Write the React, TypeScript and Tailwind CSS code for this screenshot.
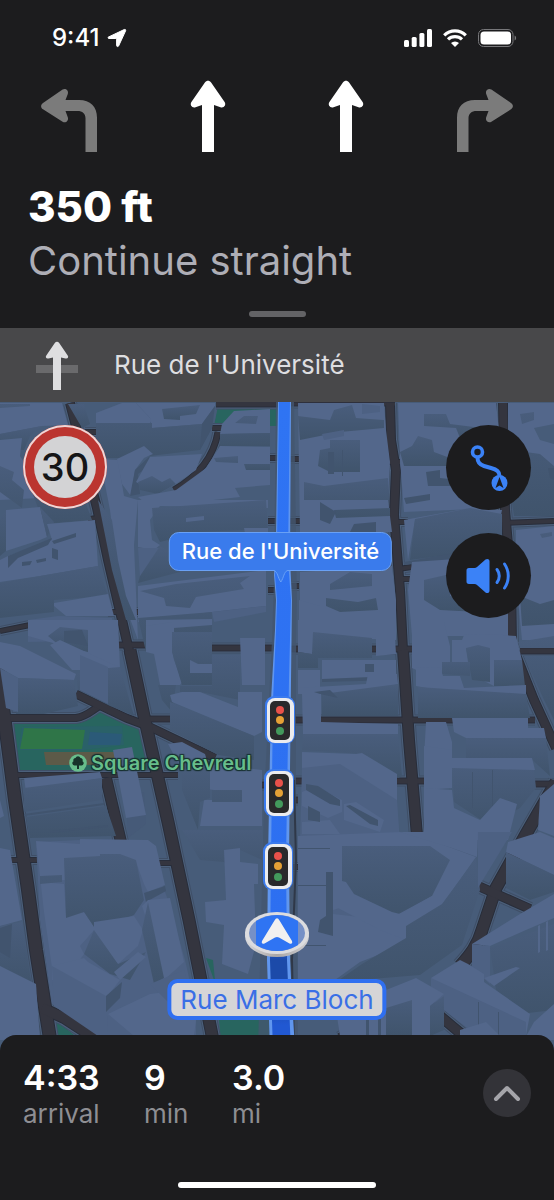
import React from 'react';

const TONES: Record<string, string> = {
  roof: '#53678b',
  soft: '#4d6183',
  wall: 'url(#wall)',
  dark: '#41546e',
};

const ROADS: { d: string; w: number }[] = [
  { d: 'M216 404H280', w: 5 },
  { d: 'M290 404H395', w: 3 },
  { d: 'M212 428H225', w: 4 },
  { d: 'M85 432H98', w: 4 },
  { d: 'M218 432C214 455 200 475 174 490', w: 5 },
  { d: 'M285 459H300M268 458H280M268 521H280M290 521H302M268 590H280M288 586H299', w: 4 },
  { d: 'M104 536L118 528', w: 5 },
  { d: 'M108 612H138M88 519L98 518', w: 4 },
  { d: 'M383 462H400M394 522H408M503 523L554 521', w: 4 },
  { d: 'M398 569L412 567M400 579H412', w: 4 },
  { d: 'M0 631L30 625', w: 4 },
  { d: 'M115 645H146M212 648H282', w: 5 },
  { d: 'M288 649H412M520 651H554', w: 5 },
  { d: 'M150 719H172M290 720H535', w: 5 },
  { d: 'M0 718H76C88 716 92 710 101 705', w: 6 },
  { d: 'M76 694L126 718L150 727L215 758', w: 7 },
  { d: 'M10 775H178', w: 4 },
  { d: 'M288 781H425M534 784H554M262 785H280M288 800H298', w: 5 },
  { d: 'M106 778L121 842', w: 10 },
  { d: 'M10 860H38M158 863H178M288 867H298', w: 4 },
  { d: 'M70 403L77 430L97 508L108 560L122 620L144 716L168 822L189 920L212 1040', w: 8 },
  { d: 'M-4 660L2 700L15 800L28 890L36 950L51 1045', w: 12 },
  { d: 'M130 650L144 716L168 822L189 920L214 1045', w: 11 },
  { d: 'M42 1008L64 1018L98 1040', w: 10 },
  { d: 'M390 403L391 440L396 470L394 515L400 590L403 650L409 740L418 840', w: 8 },
  { d: 'M403 650L409 740L417 836', w: 10 },
  { d: 'M503 403L505 510L511 580L512 645L534 700L556 748', w: 8 },
  { d: 'M556 782L526 834L496 888L482 930C478 945 470 955 460 966', w: 11 },
  { d: 'M366 1022L340 1038', w: 8 },
  { d: 'M476 885L530 909', w: 8 },
  { d: 'M440 1016L465 1037', w: 9 },
];

// painted back to front
const BUILDINGS: [string, string][] = [
  // north-west
  ['roof', 'M0 403H62L68 425L42 426L0 434Z'],
  ['wall', 'M0 404H30V406L0 408ZM68 404H84L90 424L82 428Z'],
  ['wall', 'M0 434L42 426L30 436L24 450L0 449Z'],
  ['roof', 'M0 440L22 438L20 456L34 478L40 498L0 500Z'],
  ['wall', 'M0 466L14 472L12 480L24 490L22 508L0 492ZM32 492L60 508L86 504L92 520L44 524Z'],
  ['roof', 'M6 510L40 507L47 537L40 540L6 551Z'],
  ['wall', 'M6 510V551L0 556V520ZM40 507L54 522L47 537Z'],
  ['roof', 'M8 556L52 540L47 524L95 520L98 566L40 576L0 582V560Z'],
  ['dark', 'M8 556L52 538L48 545L18 558L8 568ZM52 541L76 533V537L54 544ZM22 562L32 561L30 565L22 566ZM36 560L46 558V561L37 563ZM52 548L58 550V560L52 558Z'],
  ['wall', 'M0 583L98 566L108 596L54 600L54 612L0 618Z'],
  ['roof', 'M54 603L108 594L114 616L66 616L54 606Z'],
  ['soft', 'M28 620L58 616L112 618L114 640L28 642Z'],
  // strip east of the left avenue
  ['roof', 'M100 459L118 460L124 496L138 500L134 545L138 640L129 616L116 560L110 510Z'],
  ['wall', 'M98 500L112 520L118 560L126 596L136 620H126L112 570Z'],
  ['roof', 'M96 413L122 403H136L152 420L150 423H96Z'],
  ['roof', 'M136 403H215V406L202 424L152 428L150 418Z'],
  ['wall', 'M162 409L200 405L196 414L180 416V420L164 419Z'],
  ['wall', 'M96 423H152V428L202 424L215 406L212 428L200 450L150 456L130 458H96Z'],
  ['dark', 'M202 424L215 406L212 428L200 450Z'],
  ['roof', 'M117 459L144 446L153 454L144 458L135 470L131 496L122 484Z'],
  ['dark', 'M135 470L150 456L146 468L138 474L140 494L130 496Z'],
  ['roof', 'M150 457L202 454L196 470L176 484L158 494L136 482Z'],
  ['wall', 'M138 482L152 476L162 482L170 478L176 484L158 494L140 490Z'],
  ['roof', 'M220 434L222 424L234 411L270 409V433Z'],
  ['wall', 'M235 423L244 416H258L256 424ZM220 434L270 433V446H220Z'],
  ['roof', 'M206 468L220 446L270 447V485L235 488L240 497L150 507L138 497L176 490L198 474Z'],
  ['wall', 'M214 458L238 456V463L216 462ZM244 464H270V470H246Z'],
  ['roof', 'M138 500H268V508L160 506L150 520L152 540L160 545L154 550L138 547Z'],
  ['wall', 'M152 508L266 500L268 532L245 540L245 530L200 532L160 542L154 530Z'],
  ['roof', 'M186 518L204 516V520L186 522ZM244 528H268V560H250Z'],
  ['soft', 'M138 548H160V570L140 578Z'],
  ['wall', 'M160 546L180 558V572L138 583L140 576Z'],
  ['roof', 'M138 586L170 582L266 570V606L212 612L138 622Z'],
  ['wall', 'M140 591L176 584L250 576L240 583L164 598ZM164 598L240 583L244 589L196 597L190 608L166 606ZM138 618L212 612V650L146 652Z'],
  ['roof', 'M146 620L212 619V625L174 628V650H146Z'],
  ['soft', 'M212 612L266 606V612L214 622Z'],
  // north, between route and second avenue
  ['roof', 'M298 403H384L386 430L390 462L388 500L392 532L300 534Z'],
  ['wall', 'M298 416L330 420L334 410L352 405L356 418L384 420V428L340 432L300 440Z'],
  ['soft', 'M362 404L380 406V412L362 414ZM322 434L344 430V436L324 440Z'],
  ['wall', 'M320 450L330 448V440H360V472H330L318 466Z'],
  ['dark', 'M328 452H334V474H328ZM342 450H343V476H342Z'],
  ['wall', 'M304 482L324 486L388 478L389 500H304ZM334 510L390 508V516L336 518Z'],
  ['dark', 'M320 502L336 512L330 524L320 520ZM354 524L376 522V532H350Z'],
  ['roof', 'M300 572L392 566L396 600V640L300 636Z'],
  ['wall', 'M330 584L350 572L372 574V586L330 590ZM326 598L358 602L376 598L378 610L340 612L326 606Z'],
  ['roof', 'M299 600L320 606V652H299Z'],
  // north, between second and third avenue
  ['roof', 'M398 403H496L500 440L498 508L404 512L400 460Z'],
  ['wall', 'M424 414H446L450 424L498 430V440L460 438L456 428L424 426Z'],
  ['wall', 'M400 452L412 446L418 436L432 440L434 452L450 458L448 466H404Z'],
  ['dark', 'M426 472L440 470V478L458 480V486H428ZM404 498L430 494V500L406 504Z'],
  ['roof', 'M404 520L470 508L502 510L500 520L415 520L408 560Z'],
  ['wall', 'M415 519L470 508L502 514V548L410 560Z'],
  ['dark', 'M404 562L460 552L500 552V554L404 565Z'],
  ['roof', 'M412 562L500 556L508 600V636L412 636L408 590Z'],
  ['wall', 'M424 580L450 574V596L478 600V612L440 610L424 600Z'],
  // north-east
  ['roof', 'M508 403H554V424L534 428L540 440L554 444V470H508Z'],
  ['wall', 'M520 414L534 412V420L522 424ZM512 450L540 454L554 466V516H514L510 490Z'],
  ['dark', 'M548 468H554V480L550 478Z'],
  ['roof', 'M516 530L554 526V640H522L516 580Z'],
  ['wall', 'M540 534L552 532V536L542 538ZM520 596L540 604L554 600V624L522 626Z'],
  ['wall', 'M518 642L554 636V648H520ZM524 656H554V720L544 700Z'],
  // west, middle
  ['roof', 'M28 620H118L120 668L84 666L60 645L28 636Z'],
  ['wall', 'M48 636L60 627L88 630V652L60 646Z'],
  ['dark', 'M64 631L82 630L88 646L64 642Z'],
  ['roof', 'M0 642L20 646L76 674L74 680L18 678L0 668Z'],
  ['wall', 'M18 678L74 680L78 706L44 714H16Z'],
  ['soft', 'M0 668L18 678V712L6 708Z'],
  ['roof', 'M50 645L60 640L112 664L120 667L108 670L72 670Z'],
  ['wall', 'M76 674L108 668L120 667L134 716L110 706L78 690Z'],
  ['soft', 'M80 655L108 667V704L80 690Z'],
  ['roof', 'M146 626L172 622L172 650L174 660L182 682L180 685H160L154 654L146 652Z'],
  ['wall', 'M172 632H212V685H182L172 652Z'],
  ['roof', 'M190 660L198 664H212V673H190Z'],
  ['roof', 'M240 638H265V685H242Z'],
  ['wall', 'M212 655H240V700L200 692H180V686H212ZM158 685H176L172 712L162 700Z'],
  ['roof', 'M170 695L182 692H200L238 707L238 692H262V732L254 736L172 702Z'],
  ['wall', 'M170 702L254 736V760L218 755L170 730Z'],
  ['roof', 'M168 744L182 742L205 754L208 764L262 770V826H200L204 800H214V790L182 786V770Z'],
  ['wall', 'M182 762L210 768V798L200 802L198 830L182 790ZM212 790H242V802H212Z'],
  ['roof', 'M24 778L100 772L102 778L26 792Z'],
  ['wall', 'M24 788L102 778L102 800L24 812ZM26 817L106 806L116 836L30 838Z'],
  ['dark', 'M24 814L104 803V805L24 816ZM50 831L108 825V827L50 833Z'],
  ['roof', 'M0 800L4 816L0 818Z'],
  // centre right, middle
  ['roof', 'M298 620H394L396 654L376 656V638L312 634V654L298 652Z'],
  ['wall', 'M313 632L372 638V658H318V668H298V652L312 654Z'],
  ['roof', 'M322 660H396V680L322 680ZM298 670H320V690H298Z'],
  ['dark', 'M365 664H374V672H365ZM322 679L396 676V680L322 682Z'],
  ['roof', 'M298 688L366 684L368 674H397L398 684L362 694H298Z'],
  ['wall', 'M322 694L398 684V716H322Z'],
  ['dark', 'M314 692L330 690L338 698L320 694Z'],
  ['roof', 'M302 694H321V722L398 724V734H303Z'],
  ['wall', 'M303 734H398L402 776L398 778L363 754L302 750Z'],
  ['roof', 'M302 752L356 754L362 753L397 774V802L302 770Z'],
  ['soft', 'M302 768L340 764L397 800L400 842L300 840Z'],
  ['roof', 'M302 792L316 786L342 800V812L328 818L302 806ZM344 804L356 802L384 820L380 832L344 820ZM302 822L330 820L340 834H302Z'],
  ['dark', 'M306 784L318 786L340 800V806L330 804L306 790ZM308 806L320 812V822L308 820ZM346 806L350 805L378 820V826L370 824Z'],
  ['roof', 'M412 622H444L450 646V664H442V682L412 668Z'],
  ['roof', 'M452 640L462 640L464 635L488 634L516 636L522 660H494V686L482 680V648H466L468 662H452Z'],
  ['wall', 'M466 648L478 645L490 648V682L472 680Z'],
  ['wall', 'M494 660H522L525 686H494ZM442 662L470 662V676L442 674Z'],
  ['roof', 'M416 668L440 667L443 676H460L464 688L526 685V694L464 695L416 686Z'],
  ['wall', 'M418 687L526 694L530 718H418Z'],
  ['roof', 'M426 722H446L452 742V758L424 758ZM452 718H528V728H544L546 738H466L454 732Z'],
  ['wall', 'M466 738H546L550 776L530 758H466Z'],
  ['roof', 'M424 746L452 750V788L424 790ZM450 758H532L535 770H452Z'],
  ['wall', 'M452 768L534 770L536 788L520 808L490 826L454 802Z'],
  ['dark', 'M472 772H473V808H472ZM492 770H493V815H492Z'],
  ['roof', 'M424 788L452 790L454 808L480 820L500 798L517 804L508 840H424Z'],
  ['roof', 'M540 796L554 784V836L538 830Z'],
  // west, bottom
  ['roof', 'M0 848L10 850L22 920L0 926Z'],
  ['wall', 'M0 926L22 922L32 986L0 966Z'],
  ['dark', 'M0 928L12 924L10 958L0 952Z'],
  ['roof', 'M0 966L36 984L40 1040H0Z'],
  ['soft', 'M36 842L80 840V846L148 846L168 900L185 960L196 1008V1036L100 1036L52 1004L40 920Z'],
  ['roof', 'M36 841L80 844V839L148 840L156 846L165 885L148 892L144 884L136 862L96 860L64 858L66 880H40V882L64 884L66 916L84 912L96 928L80 946L84 954L70 974L52 968L44 912Z'],
  ['wall', 'M64 858L100 856V854H120L136 860L144 900L134 915L96 930L84 912L66 918ZM40 876L62 875V882L40 884Z'],
  ['dark', 'M144 893L165 886L166 891L146 902Z'],
  ['roof', 'M94 922L134 916L143 930L138 946L118 964L94 946Z'],
  ['wall', 'M94 930L118 964L146 952L130 980L110 974L84 954Z'],
  ['roof', 'M52 966L84 958L88 962L120 980L106 998L52 980Z'],
  ['soft', 'M52 966L106 996L108 1036H98L54 1006Z'],
  ['dark', 'M106 996L122 982L120 998L106 1012Z'],
  ['roof', 'M108 1014L150 994L180 990L196 1020L194 1036H134ZM114 972L138 952L146 957L120 980Z'],
  ['roof', 'M142 906L148 900L170 898L184 962L164 980L150 930Z'],
  ['wall', 'M148 902L164 978L154 984L142 930Z'],
  ['soft', 'M150 984L184 970L192 1000L170 1004Z'],
  ['wall', 'M182 830H262V860L240 850V880L224 862L200 860Z'],
  ['roof', 'M224 850L240 848V862L258 864V884H254L256 944L248 974L222 964L224 925L206 922L205 902L226 900Z'],
  // centre, bottom
  ['roof', 'M298 836L400 832L430 838L444 845L476 857L442 905L406 932L404 945L360 962L335 980L298 980Z'],
  ['wall', 'M342 846L430 846L450 860L432 896L395 916H372L352 900L342 895Z'],
  ['dark', 'M298 848H330V849H298ZM298 885H326V886H298ZM326 872H333V936L318 932L320 920L326 916ZM298 945H326V946H298Z'],
  ['soft', 'M333 910L352 904L392 916L386 920L333 914Z'],
  ['roof', 'M338 880L346 882L354 894L392 912L400 914L432 896L442 904L406 928V940L380 930L338 908Z'],
  ['wall', 'M406 926L442 904L476 858L480 890L462 945L420 975L336 982L362 964L406 938Z'],
  ['roof', 'M400 832L478 832L477 857L452 848Z'],
  ['soft', 'M478 832L512 832L478 888Z'],
  ['roof', 'M508 842L540 832L554 838V875L506 852Z'],
  ['wall', 'M506 852L554 875V892L530 900L506 888Z'],
  ['wall', 'M490 948L554 924V1010L520 1014L496 990Z'],
  ['roof', 'M472 944L520 914L554 894V918L526 930L490 946Z'],
  ['soft', 'M472 944L490 946V984L472 968Z'],
  ['roof', 'M538 926L540 925V952L538 953ZM546 922L548 921V950L546 951Z'],
  ['roof', 'M431 978L460 960L468 964L484 974V982L530 1014L526 1036H490L440 996Z'],
  ['soft', 'M431 978L526 1022V1038H480L431 1000Z'],
  ['roof', 'M484 978L516 967L520 968L494 986ZM336 1010L416 978L444 994L430 1006L432 1036H340Z'],
  ['wall', 'M386 1008L412 1000V1036H386ZM430 1006L444 996V1030L430 1036Z'],
  ['dark', 'M366 1010H369V1036H366ZM378 1006H381V1036H378ZM478 1002H479V1036H478ZM498 1012H499V1036H498Z'],
  ['roof', 'M534 1022L554 1004V1040H524ZM460 1030L486 1022L500 1036V1040H460Z'],
];

type GlyphProps = { className?: string };

const StraightArrow: React.FC<GlyphProps> = ({ className }) => (
  <svg viewBox="0 0 58 72" fill="currentColor" className={className}>
    <path d="M23 72V25l-6.500 2.300c-3.400 1.100-6-2.300-4.100-5.200L25.900 2.400c1.600-2.300 4.600-2.300 6.200 0l13.500 19.700c1.900 2.900-.7 6.300-4.100 5.200L35 25v47Z" />
  </svg>
);

const TurnArrow: React.FC<GlyphProps> = ({ className }) => (
  <svg viewBox="0 0 58 72" fill="currentColor" className={className}>
    <path d="M45.500 72V38.500c0-5-3-7.500-8-7.500H25.500l2.300 6.300c1.200 3.400-2.200 6.300-5.200 4.500L3 29.300c-2.500-1.700-2.500-4.700 0-6.400L22.600 9.600c3-1.800 6.400.9 5.200 4.300L25.500 20H39c11.500 0 18 7 18 17.500V72Z" />
  </svg>
);

const CityMap: React.FC = () => (
  <svg
    viewBox="0 402 554 649"
    preserveAspectRatio="xMidYMin slice"
    className="absolute inset-0 h-full w-full"
    aria-hidden="true"
  >
    <defs>
      <linearGradient id="route" gradientUnits="userSpaceOnUse" x1="0" y1="402" x2="0" y2="1051">
        <stop offset="0" stopColor="#2f74f3" />
        <stop offset="0.82" stopColor="#2d6ff1" />
        <stop offset="0.86" stopColor="#1c4aa9" />
        <stop offset="0.92" stopColor="#1c4aa9" />
        <stop offset="0.96" stopColor="#2158d2" />
      </linearGradient>
      <linearGradient id="wall" x1="0" y1="0" x2="0" y2="1">
        <stop offset="0" stopColor="#495d7c" />
        <stop offset="1" stopColor="#40546c" />
      </linearGradient>
      <linearGradient id="rim" x1="0" y1="0" x2="1" y2="0">
        <stop offset="0" stopColor="#d9d9dc" />
        <stop offset="0.5" stopColor="#a9a6a6" />
        <stop offset="1" stopColor="#cfcfd2" />
      </linearGradient>
    </defs>
    <rect y="402" width="554" height="660" fill="#475c79" />

    <g fill="#28655f">
      <path d="M218 406H280V426H214Z" />
      <path d="M7 722L76 720C90 718 94 712 102 711L140 730L150 771L14 772Z" />
      <path d="M206 958L213 960L222 1051H292V980H214ZM56 1020L80 1040H56Z" />
    </g>
    <path d="M22 727L122 726L124 745L84 750H18Z" fill="#2a6168" />
    <path d="M24 728L85 730L82 749H20Z" fill="#2f7548" />
    <path d="M90 732L122 734L120 745H88Z" fill="#2b5a78" />
    <path d="M44 752H116V765H46Z" fill="#5c5a48" />

    <g fill="none" strokeLinejoin="round">
      {ROADS.map((r) => (
        <path key={r.d} d={r.d} stroke="#3f4f67" strokeWidth={r.w + 6} />
      ))}
      {ROADS.map((r) => (
        <path key={r.d} d={r.d} stroke="#4c607b" strokeWidth={r.w + 4} />
      ))}
      {ROADS.map((r) => (
        <path key={r.d} d={r.d} stroke="#282d3a" strokeWidth={r.w + 2} />
      ))}
      {ROADS.map((r) => (
        <path key={r.d} d={r.d} stroke="#34353f" strokeWidth={r.w} />
      ))}
    </g>

    {BUILDINGS.map(([tone, d]) => (
      <path key={d} d={d} fill={TONES[tone]} />
    ))}
    <path d="M126 795L144 792L146 824L128 838Z" fill="#465a78" />
    <path d="M113 750L132 747L146 815L126 818Z" fill="#53678b" />

    {/* route */}
    <path d="M276 402L274 580L272 640L264 800L258 1051H298L296 800L296 640L297 600L294 402Z" fill="#43566f" opacity="0.8" />
    <path d="M294 780L296 860L292 960L294 1051" fill="none" stroke="#2f3848" strokeWidth="2" />
    <path d="M278 402H291L290 560L292 600L291 680L289 860L290 960L295 1051H270L267 960L268 860L271 700L275 630L276 600L274 575L276 540Z" fill="#6096ee" />
    <path d="M279 402H290L288 560L291 600L289 680L286 860L287 960L291 1051H273L270 960L271 860L273 700L276 630L277 600L275 575L277 540Z" fill="url(#route)" />

    {[[280, 720], [279, 793], [278, 866]].map(([x, y]) => (
      <g key={y}>
        <rect x={x - 15} y={y - 24} width="30" height="48" rx="9" fill="#3a7aee" />
        <rect x={x - 13} y={y - 22} width="27" height="45" rx="8" fill="#ececee" />
        <rect x={x - 10} y={y - 19} width="20" height="39" rx="5" fill="#29292b" />
        <circle cx={x} cy={y - 10} r="4" fill="#e8514a" />
        <circle cx={x} cy={y} r="4" fill="#e5a136" />
        <circle cx={x} cy={y + 11} r="4" fill="#43995c" />
      </g>
    ))}

    {/* current position */}
    <ellipse cx="277" cy="936" rx="32" ry="21" fill="url(#rim)" />
    <ellipse cx="277" cy="933" rx="32" ry="21" fill="#dcdcdf" />
    <ellipse cx="277" cy="933" rx="28" ry="18" fill="#7690c6" />
    <path d="M256 921Q277 909 298 921V945Q277 957 256 945Z" fill="#2f74f3" />
    <path
      d="M274.500 920.500Q277 916 279.500 920.500L292 941Q293 944.500 289.500 943.500L279 937.500Q277 936.500 275 937.500L264.500 943.500Q261 944.500 262 941Z"
      fill="#f1f0f0"
    />
  </svg>
);

const TRIP = [
  { value: '4:33', unit: 'arrival', width: 'w-[97px]' },
  { value: '9', unit: 'min', width: 'w-16' },
  { value: '3.0', unit: 'mi', width: 'w-16' },
];

export default function App() {
  return (
    <div className="flex min-h-screen flex-col bg-[#1c1c1e] font-['Inter',sans-serif] text-white">
      <header>
        <div className="flex h-[75px] items-center justify-between pr-[37px] pl-[52px]">
          <div className="flex items-center gap-2">
            <span className="text-2xl font-medium">9:41</span>
            <svg viewBox="0 0 20 20" fill="currentColor" stroke="currentColor" strokeWidth="1" strokeLinejoin="round" className="h-5 w-5" aria-hidden="true">
              <path d="M1.500 9 17.300 1.500c1-.4 1.700.3 1.300 1.300L11.600 18c-.5 1-2 .7-2-.5v-6.300c0-.5-.2-.7-.7-.7H2C.9 10.500.6 9.500 1.500 9Z" />
            </svg>
          </div>
          <div className="flex items-center gap-[11px]">
            <svg viewBox="0 0 28 18" fill="currentColor" className="h-[18px] w-7" aria-label="Signal">
              <rect y="11" width="5" height="7" rx="1.500" />
              <rect x="7.700" y="8" width="5" height="10" rx="1.500" />
              <rect x="15.400" y="4" width="5" height="14" rx="1.500" />
              <rect x="23" width="5" height="18" rx="1.500" />
            </svg>
            <svg viewBox="0 0 24 18" className="h-[18px] w-6" aria-label="Wi-Fi">
              <g fill="none" stroke="currentColor" strokeWidth="3.200">
                <path d="M1.200 6.300a15.600 15.600 0 0 1 21.600 0" />
                <path d="M5 10.400a10 10 0 0 1 14 0" />
              </g>
              <path d="M12 18 8 14a5.800 5.800 0 0 1 8 0Z" fill="currentColor" />
            </svg>
            <svg viewBox="0 0 39 18" className="h-[18px] w-[39px]" aria-label="Battery">
              <rect x="0.500" y="0.500" width="34.500" height="17" rx="5" fill="none" stroke="#77777a" />
              <rect x="2.500" y="2.500" width="30.500" height="13" rx="3.500" fill="currentColor" />
              <path d="M36.600 6.500c2 .8 2 4.200 0 5Z" fill="#77777a" />
            </svg>
          </div>
        </div>

        <div className="grid grid-cols-4 justify-items-center pt-[5px]">
          <TurnArrow className="h-[72px] w-[58px] text-[#7b7b7b]" />
          <StraightArrow className="h-[72px] w-[58px]" />
          <StraightArrow className="h-[72px] w-[58px]" />
          <TurnArrow className="h-[72px] w-[58px] -scale-x-100 text-[#7b7b7b]" />
        </div>

        <div className="px-7 pt-7">
          <h1 className="text-[42px] leading-[54px] font-extrabold">350 ft</h1>
          <p className="text-[40px] leading-[54px] text-[#aeaeb6]">Continue straight</p>
        </div>
        <button aria-label="Show all steps" className="mx-auto mt-[23px] mb-[11px] block h-[6px] w-[57px] rounded-full bg-[#636366]" />
      </header>

      <div className="flex h-[74px] items-center gap-9 bg-[#48484a] px-9 text-[#dedee0]">
        <svg viewBox="0 0 42 50" className="h-[50px] w-[42px]" aria-hidden="true">
          <path d="M0 25H42V33H0Z" fill="#6a6a6c" />
          <path
            d="M17 50V17.400L12.500 18.500c-2.200.6-3.400-1.300-2.200-3L18.800 2.900c1.100-1.700 3.300-1.700 4.400 0L31.700 15.500c1.200 1.700 0 3.600-2.200 3L25 17.400V50Z"
            fill="currentColor"
          />
        </svg>
        <p className="text-[26px] leading-8">Rue de l'Université</p>
      </div>

      <main className="relative min-h-[400px] flex-1 overflow-hidden">
        <CityMap />

        <div className="relative flex items-start justify-between p-[23px]">
          <div className="flex h-[84px] w-[84px] items-center justify-center rounded-full bg-[#bb3530] ring-2 ring-[#efd6d6] ring-inset">
            <div className="flex h-[62px] w-[62px] items-center justify-center rounded-full bg-[#d3d3d5] text-[38px] font-medium text-[#151517]">
              30
            </div>
          </div>
          <div className="flex flex-col gap-[23px]">
            <button aria-label="Route overview" className="flex h-[85px] w-[85px] items-center justify-center rounded-full bg-[#1c1c1e] text-[#3b82f7]">
              <svg viewBox="0 0 38 46" fill="none" stroke="currentColor" className="h-[46px] w-[38px]">
                <circle cx="7.500" cy="7" r="5" strokeWidth="3.600" />
                <path d="M7.500 12.500C7.500 17 9 19.500 14 21l7 2c6 1.700 8.500 3.500 8.500 8" strokeWidth="4" />
                <circle cx="29.500" cy="38" r="8" fill="currentColor" stroke="none" />
                <path d="m29.500 32 4 11-4-2.600-4 2.600Z" fill="#1c1c1e" stroke="none" />
              </svg>
            </button>
            <button aria-label="Audio" className="flex h-[85px] w-[85px] items-center justify-center rounded-full bg-[#1c1c1e] text-[#3b82f7]">
              <svg viewBox="0 0 46 36" className="h-9 w-[46px]">
                <path d="M3 10H8.500c1 0 1.800-.3 2.500-1L19.500 1.600c1.600-1.300 4-.5 4 1.700v29.400c0 2.200-2.400 3-4 1.700L11 27c-.7-.7-1.500-1-2.500-1H3C1.200 26 .5 25 .5 23.500v-11C.5 11 1.200 10 3 10Z" fill="currentColor" />
                <g fill="none" stroke="currentColor" strokeWidth="3" strokeLinecap="round">
                  <path d="M31 11.500a10.500 10.500 0 0 1 0 13" />
                  <path d="M38.500 6a21 21 0 0 1 0 24" />
                </g>
              </svg>
            </button>
          </div>
        </div>

        <div className="absolute top-[130px] left-1/2 flex -translate-x-1/2 flex-col items-center pl-[7px]">
          <p className="rounded-[10px] border border-[#6aa1f5] bg-[#3a7bec] px-3 text-[22px] leading-[37px] font-medium whitespace-nowrap">
            Rue de l'Université
          </p>
          <svg viewBox="0 0 14 13" className="-mt-px h-[13px] w-[14px]" aria-hidden="true">
            <path d="M0 0C4 1 4 8 7 12C10 8 10 1 14 0Z" fill="#3a7bec" />
            <path d="M0 .5C4 1.500 4 8 7 12C10 8 10 1.500 14 .5" fill="none" stroke="#6aa1f5" />
          </svg>
        </div>

        <div className="absolute top-[347px] left-[69px] flex items-center gap-1">
          <svg viewBox="0 0 18 18" className="h-[18px] w-[18px]" aria-hidden="true">
            <circle cx="9" cy="9" r="8.800" fill="#67bd8b" />
            <path d="M8 15v-3.500H5.500a2.300 2.300 0 0 1-1-4.300A2.300 2.300 0 0 1 6.500 4a2.700 2.700 0 0 1 5 0 2.300 2.300 0 0 1 2 3.200 2.300 2.300 0 0 1-1 4.300H10V15Z" fill="#17332a" />
          </svg>
          <p className="text-xl leading-7 font-semibold whitespace-nowrap text-[#67bd8b] [text-shadow:1px_1px_1px_#16302f,-1px_-1px_1px_#16302f,1px_-1px_1px_#16302f,-1px_1px_1px_#16302f]">
            Square Chevreul
          </p>
        </div>

        <p className="absolute top-[577px] left-1/2 -translate-x-1/2 rounded-[10px] border-4 border-[#2f6ff0] bg-[#d5d5d7] px-[9px] text-[26px] leading-[33px] whitespace-nowrap text-[#3a6fe6]">
          Rue Marc Bloch
        </p>
      </main>

      <footer className="relative -mt-4 rounded-t-2xl bg-[#1c1c1e] px-[23px] pt-[23px] pb-3">
        <div className="flex items-start justify-between">
          <dl className="flex gap-6">
            {TRIP.map((item) => (
              <div key={item.unit} className={`flex flex-col-reverse ${item.width}`}>
                <dt className="text-[26px] leading-8 text-[#8e8e93]">{item.unit}</dt>
                <dd className="text-[34px] leading-10 font-semibold">{item.value}</dd>
              </div>
            ))}
          </dl>
          <button aria-label="More options" className="mt-[11px] flex h-12 w-12 items-center justify-center rounded-full bg-[#333338]">
            <svg viewBox="0 0 28 18" className="h-[18px] w-7" fill="none" stroke="#a5a5aa" strokeWidth="4" strokeLinecap="round" strokeLinejoin="round">
              <path d="M3 15 14 4l11 11" />
            </svg>
          </button>
        </div>
        <div className="mx-auto mt-[52px] h-[6px] w-[198px] rounded-full bg-white" />
      </footer>
    </div>
  );
}
